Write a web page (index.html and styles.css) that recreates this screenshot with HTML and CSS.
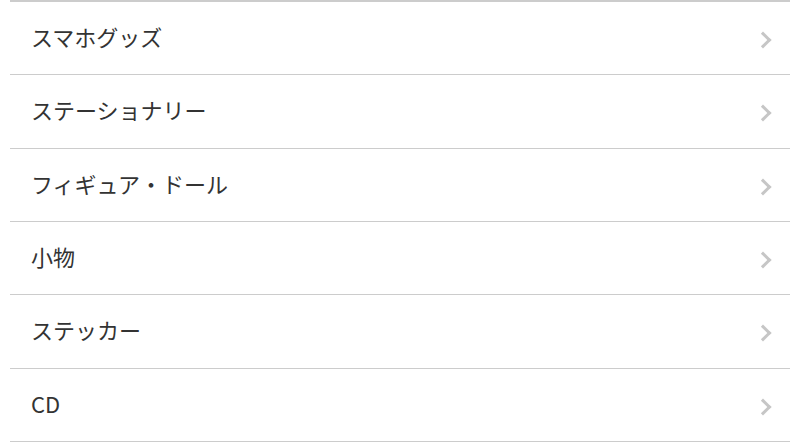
FILE: index.html
```html
<!DOCTYPE html>
<html>
<head>
    <link rel="stylesheet" href="styles.css">
</head>
<body>
    <ul class="category-list">
        <li class="category-item"><span class="label">スマホグッズ</span><span class="chevron"></span></li>
        <li class="category-item"><span class="label">ステーショナリー</span><span class="chevron"></span></li>
        <li class="category-item"><span class="label">フィギュア・ドール</span><span class="chevron"></span></li>
        <li class="category-item"><span class="label">小物</span><span class="chevron"></span></li>
        <li class="category-item"><span class="label">ステッカー</span><span class="chevron"></span></li>
        <li class="category-item"><span class="label">CD</span><span class="chevron"></span></li>
    </ul>
</body>
</html>
```

FILE: styles.css
```css
body {
    margin: 0;
    font-family: "Noto Sans CJK JP", "Noto Sans", sans-serif;
    background: #fff;
    color: #333;
}
.category-list {
    list-style: none;
    margin: 0 10px;
    padding: 0;
    border-top: 2px solid #cccccc;
}
.category-item {
    display: flex;
    align-items: center;
    justify-content: space-between;
    height: 73.33px;
    box-sizing: border-box;
    padding: 0 21px 4px 21px;
    border-bottom: 1.5px solid #cccccc;
    cursor: pointer;
}
.label {
    font-size: 22px;
    line-height: 1;
}
.chevron {
    width: 9px;
    height: 9px;
    margin-top: 8px;
    border-top: 3px solid #c6c6c6;
    border-right: 3px solid #c6c6c6;
    transform: rotate(45deg);
}
```
